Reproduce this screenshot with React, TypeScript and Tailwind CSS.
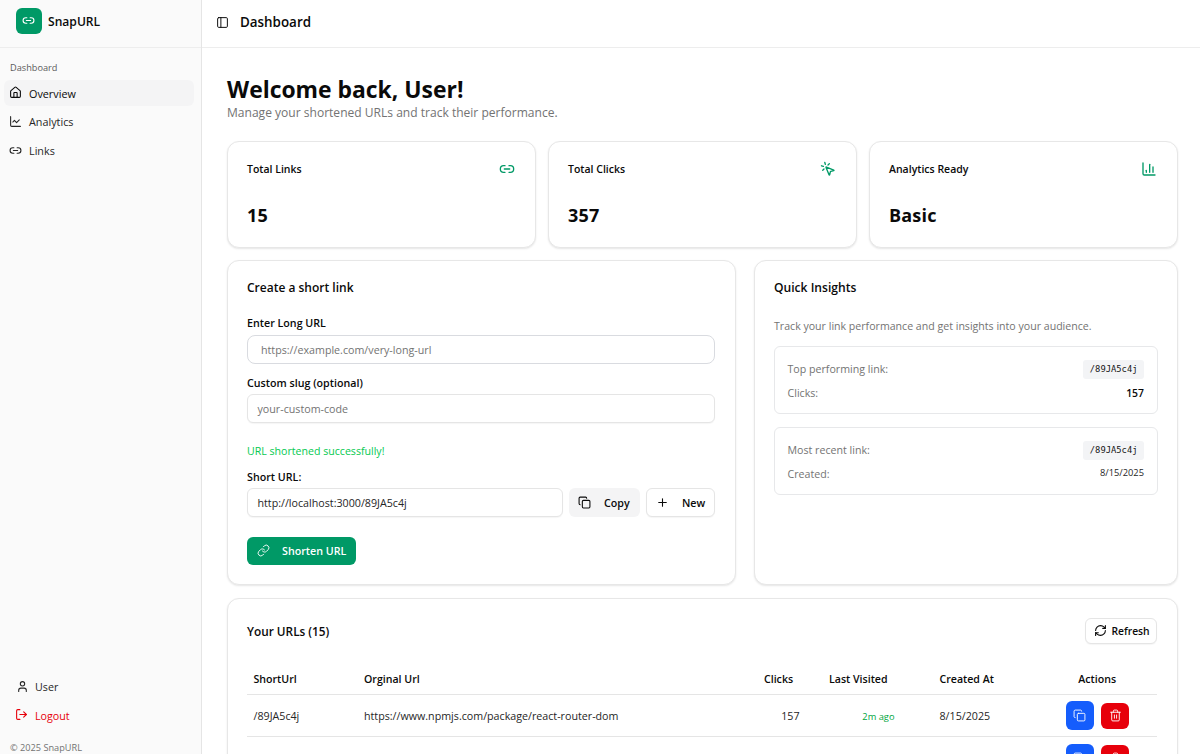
import type { ReactNode } from "react";
import {
  ChartColumn,
  ChartLine,
  Copy,
  House,
  Link,
  Link2,
  LogOut,
  MousePointerClick,
  PanelLeft,
  Plus,
  RefreshCw,
  Trash2,
  User,
} from "lucide-react";

const card =
  "rounded-[12px] border border-[#e7e7e7] bg-white shadow-[0_1px_2px_rgba(0,0,0,0.1)]";
const field =
  "flex items-center rounded-[6px] border border-[#e5e5e5] bg-white text-[10.7px] shadow-[0_1px_1px_rgba(0,0,0,0.04)]";

function Sidebar() {
  return (
    <aside className="flex w-[202px] shrink-0 flex-col border-r border-[#e5e5e5] bg-[#fafafa]">
      <div className="flex h-[48px] shrink-0 items-center gap-[6px] border-b border-[#ededed] pb-[5px] pl-4">
        <div className="flex size-[26px] items-center justify-center rounded-[6px] bg-[#009966] pr-px text-white">
          <Link2 size={13} className="-mt-px" />
        </div>
        <span className="pt-[2px] text-[12.1px] font-semibold">SnapURL</span>
      </div>
      <nav className="flex flex-col gap-[3px] px-1 pt-[7px]">
        <div className="flex h-[22px] items-center pt-[3px] pl-[6px] text-[9.2px] font-medium text-[#5b5b5b]">
          Dashboard
        </div>
        <div className="flex flex-col gap-[2.8px] text-[10.8px]">
          <div className="flex h-[26px] w-[190px] items-center gap-[7px] rounded-[6px] bg-[#f4f4f5] pl-[5px] font-medium">
            <House size={13} className="-mt-px" />
            <span className="pt-[2px]">Overview</span>
          </div>
          <div className="flex h-[26px] items-center gap-[7px] pl-[5px] text-[#262626]">
            <ChartLine size={13} className="-mt-px" />
            <span className="pt-px">Analytics</span>
          </div>
          <div className="flex h-[26px] items-center gap-[7px] pl-[5px] text-[#262626]">
            <Link2 size={13} className="-mt-px" />
            <span className="pt-px">Links</span>
          </div>
        </div>
      </nav>
      <div className="mt-auto flex flex-col pl-[10px] text-[10.7px]">
        <div className="flex h-[28px] items-center gap-[6.5px] pl-[5.5px] text-[#262626]">
          <User size={13} className="-mt-[2px]" />
          <span className="pt-px">User</span>
        </div>
        <div className="flex h-[28px] items-center gap-[7px] pl-[5px] text-[#e7000b]">
          <LogOut size={13} className="-mt-px" />
          <span className="pt-[2px]">Logout</span>
        </div>
        <div className="mt-[10px] h-[15px] text-[9.2px] leading-[17px] text-[#737373]">
          © 2025 SnapURL
        </div>
      </div>
    </aside>
  );
}

function Stat({ label, value, icon }: { label: string; value: string; icon: ReactNode }) {
  return (
    <div className={`${card} h-[107px] pt-[18px] pr-[20px] pl-[19px]`}>
      <div className="flex h-[20px] items-center justify-between text-[10.5px] font-semibold">
        <span>{label}</span>
        <span className="pb-[2px] text-[#009966]">{icon}</span>
      </div>
      <div className="mt-[23px] text-[18px] leading-[24px] font-bold tracking-[0.01em]">
        {value}
      </div>
    </div>
  );
}

function CreateCard() {
  return (
    <section className={`${card} flex h-[325px] w-[509px] flex-col pt-[16px] pr-[20px] pl-[19px]`}>
      <h2 className="h-[20px] text-[12px] leading-[22px] font-semibold">Create a short link</h2>
      <label className="mt-[18px] h-[16px] text-[10.7px] leading-[16px] font-semibold">
        Enter Long URL
      </label>
      <div className="mt-[4px] flex h-[29px] items-center rounded-[8px] border border-[#d9dbe0] pt-px pl-[13px] text-[10.7px] text-[#737373]">
        https://example.com/very-long-url
      </div>
      <label className="mt-[11px] h-[16px] text-[10.7px] leading-[16px] font-semibold">
        Custom slug (optional)
      </label>
      <div className={`${field} mt-[3px] h-[29px] pt-px pl-[9.5px] text-[#737373]`}>
        your-custom-code
      </div>
      <p className="mt-[20px] h-[16px] text-[10.6px] leading-[16px] text-[#05c951]">
        URL shortened successfully!
      </p>
      <label className="mt-[10px] h-[16px] text-[10.7px] leading-[16px] font-semibold">
        Short URL:
      </label>
      <div className="mt-[3px] flex h-[29px] gap-[6px]">
        <div className={`${field} w-[316px] pt-px pl-[9.5px] text-[#262626]`}>
          http://localhost:3000/89JA5c4j
        </div>
        <button className="flex w-[71px] items-center gap-[13px] rounded-[6px] bg-[#f4f4f5] pl-[9px] text-[10.7px] font-semibold">
          <Copy size={13} />
          <span className="pt-px">Copy</span>
        </button>
        <button className={`${field} w-[69px] gap-[13px] pl-[9px] font-semibold`}>
          <Plus size={13} />
          <span className="pt-px">New</span>
        </button>
      </div>
      <button className="mt-[20px] flex h-[28px] w-[109px] items-center gap-[12.5px] rounded-[6px] bg-[#009966] pl-[9.5px] text-[10.7px] font-semibold text-white">
        <Link size={13} strokeWidth={1.7} className="-mt-px" />
        <span className="pt-px">Shorten URL</span>
      </button>
    </section>
  );
}

function Insight({
  label,
  sub,
  children,
}: {
  label: string;
  sub: string;
  children: ReactNode;
}) {
  return (
    <div className="flex h-[68px] flex-col rounded-[6px] border border-[#e7e8ea] px-[12.5px] pt-[12px] text-[10.65px] text-[#737373]">
      <div className="flex h-[20px] items-center justify-between">
        <span className="pt-[2px]">{label}</span>
        <code className="mt-px flex h-[19px] items-center rounded-[3px] bg-[#f3f4f6] px-[6.5px] pt-px font-['DejaVu_Sans_Mono',monospace] text-[8.8px] text-[#171717]">
          /89JA5c4j
        </code>
      </div>
      <div className="mt-[4px] flex h-[20px] items-center justify-between">
        <span className="pt-[2px]">{sub}</span>
        {children}
      </div>
    </div>
  );
}

function InsightsCard() {
  return (
    <section className={`${card} h-[325px] w-[424px] pt-[16px] pr-[19.5px] pl-[19px]`}>
      <h2 className="h-[20px] text-[12.1px] leading-[22px] font-semibold">Quick Insights</h2>
      <p className="mt-[20px] h-[18px] text-[10.6px] leading-[18px] text-[#737373]">
        Track your link performance and get insights into your audience.
      </p>
      <div className="mt-[11px] flex flex-col gap-[13px]">
        <Insight label="Top performing link:" sub="Clicks:">
          <span className="pt-[2px] text-[10.4px] font-semibold text-[#0a0a0a]">157</span>
        </Insight>
        <Insight label="Most recent link:" sub="Created:">
          <span className="pb-px text-[9.3px] text-[#262626]">8/15/2025</span>
        </Insight>
      </div>
    </section>
  );
}

const columns = "grid grid-cols-[110px_400px_65px_111px_105px_118.5px]";

function Actions() {
  return (
    <div className="flex items-center justify-center gap-[7px]">
      <button className="flex size-[28.5px] items-center justify-center rounded-[6px] bg-[#155dfc] text-white">
        <Copy size={13} strokeWidth={1.7} />
      </button>
      <button className="flex h-[26px] w-[28px] items-center justify-center rounded-[6px] bg-[#e7000b] text-white">
        <Trash2 size={13} strokeWidth={1.7} />
      </button>
    </div>
  );
}

function Row({
  slug = "",
  url = "",
  clicks = "",
  visited = "",
  created = "",
}: {
  slug?: string;
  url?: string;
  clicks?: string;
  visited?: string;
  created?: string;
}) {
  return (
    <div
      className={`${columns} h-[42.4px] items-center border-b border-[#e5e5e5] text-[10.7px] text-[#262626]`}
    >
      <span className="pt-px pl-[6.5px]">{slug}</span>
      <span className="pt-px pl-[7px]">{url}</span>
      <span className="pt-px pr-[22.5px] text-right">{clicks}</span>
      <span className="pt-[2px] pr-[38.5px] text-right text-[9.3px] text-[#00a63e]">{visited}</span>
      <span className="pt-px pl-[6.5px]">{created}</span>
      <Actions />
    </div>
  );
}

function UrlsCard() {
  return (
    <section className={`${card} h-[400px] shrink-0 pt-[19px] pr-[20px] pl-[19px]`}>
      <div className="flex h-[26px] items-center justify-between">
        <h2 className="pt-[2px] text-[11.8px] font-semibold">Your URLs (15)</h2>
        <button className={`${field} h-[26px] w-[72px] gap-[5px] pl-[7.5px] font-semibold`}>
          <RefreshCw size={13} />
          <span className="pt-px text-[10.3px]">Refresh</span>
        </button>
      </div>
      <div
        className={`${columns} mt-[19px] h-[32px] items-center border-b border-[#e5e5e5] pt-px text-[10.6px] font-semibold`}
      >
        <span className="pt-px pl-[6.5px]">ShortUrl</span>
        <span className="pt-px pl-[7px]">Orginal Url</span>
        <span className="pt-px pl-[7px]">Clicks</span>
        <span className="pt-px pl-[7px]">Last Visited</span>
        <span className="pt-px pl-[6.5px]">Created At</span>
        <span className="pt-px text-center">Actions</span>
      </div>
      <Row
        slug="/89JA5c4j"
        url="https://www.npmjs.com/package/react-router-dom"
        clicks="157"
        visited="2m ago"
        created="8/15/2025"
      />
      <Row />
    </section>
  );
}

export default function App() {
  return (
    <div className="flex h-[754px] w-[1200px] overflow-hidden bg-white font-['Open_Sans','Noto_Sans',sans-serif] text-[#0a0a0a]">
      <Sidebar />
      <div className="flex min-w-0 flex-1 flex-col">
        <header className="flex h-[48px] shrink-0 items-center gap-[11px] border-b border-[#ededed] pb-[3px] pl-[14px]">
          <PanelLeft size={13} strokeWidth={1.8} />
          <h1 className="text-[13.4px] font-semibold">Dashboard</h1>
        </header>
        <main className="flex min-h-0 flex-1 flex-col pr-[22px] pl-[25px]">
          <div className="mt-[26px] h-[32px] shrink-0 text-[22.9px] leading-[32px] font-bold">
            Welcome back, User!
          </div>
          <p className="h-[14px] shrink-0 text-[12.06px] leading-[14px] text-[#737373]">
            Manage your shortened URLs and track their performance.
          </p>
          <div className="mt-[21px] grid shrink-0 grid-cols-3 gap-[12px]">
            <Stat label="Total Links" value="15" icon={<Link2 size={16} />} />
            <Stat label="Total Clicks" value="357" icon={<MousePointerClick size={16} />} />
            <Stat label="Analytics Ready" value="Basic" icon={<ChartColumn size={16} />} />
          </div>
          <div className="mt-[11.6px] mb-[13.4px] flex shrink-0 justify-between">
            <CreateCard />
            <InsightsCard />
          </div>
          <UrlsCard />
        </main>
      </div>
    </div>
  );
}
